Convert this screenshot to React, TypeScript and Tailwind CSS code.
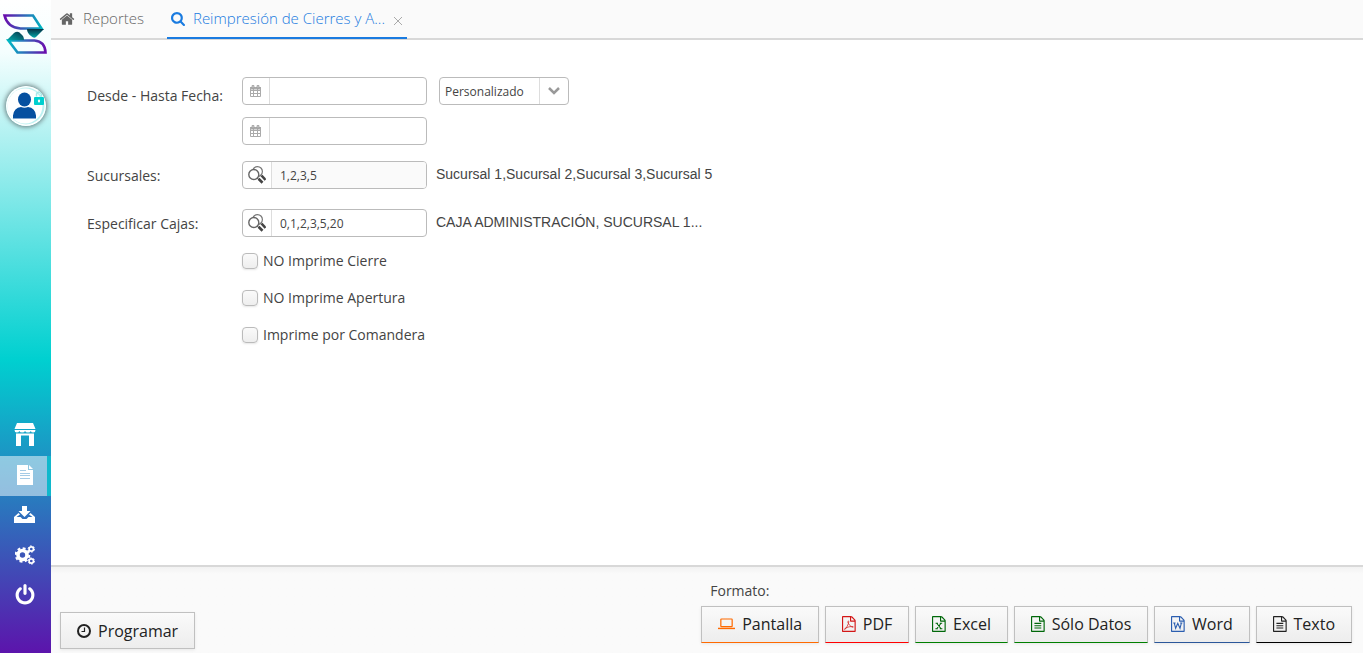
import { useState } from "react";
import type { ReactNode } from "react";

type IconProps = { className?: string };

function HomeIcon({ className }: IconProps) {
  return (
    <svg viewBox="0 0 1792 1792" fill="currentColor" className={className}>
      <path d="M1472 992v480q0 26-19 45t-45 19h-384v-384h-256v384h-384q-26 0-45-19t-19-45v-480q0-1 .5-3t.5-3l575-474 575 474q1 2 1 6zm223-69l-62 74q-8 9-21 11h-3q-13 0-21-7l-692-577-692 577q-12 8-24 7-13-2-21-11l-62-74q-8-10-7-23.5t11-21.5l719-599q32-26 76-26t76 26l244 204v-195q0-14 9-23t23-9h192q14 0 23 9t9 23v408l219 182q10 8 11 21.5t-7 23.5z" />
    </svg>
  );
}

function SearchIcon({ className }: IconProps) {
  return (
    <svg viewBox="64 128 1664 1664" fill="currentColor" className={className}>
      <path d="M1216 832q0-185-131.5-316.5t-316.5-131.5-316.5 131.5-131.5 316.5 131.5 316.5 316.5 131.5 316.5-131.5 131.5-316.5zm512 832q0 52-38 90t-90 38q-54 0-90-38l-343-342q-179 124-399 124-143 0-273.5-55.5t-225-150-150-225-55.5-273.5 55.5-273.5 150-225 225-150 273.5-55.5 273.5 55.5 225 150 150 225 55.5 273.5q0 220-124 399l343 343q37 37 37 90z" />
    </svg>
  );
}

function PowerIcon({ className }: IconProps) {
  return (
    <svg viewBox="0 0 1792 1792" fill="currentColor" className={className}>
      <path d="M1664 896q0 156-61 298t-164 245-245 164-298 61-298-61-245-164-164-245-61-298q0-182 80.5-343t226.5-270q43-32 95.5-25t83.5 50q32 42 24.5 94.5t-49.5 84.5q-98 74-151.5 181t-53.5 228q0 104 40.5 198.5t109.5 163.5 163.5 109.5 198.5 40.5 198.5-40.5 163.5-109.5 109.5-163.5 40.5-198.5q0-121-53.5-228t-151.5-181q-42-32-49.5-84.5t24.5-94.5q31-43 84-50t95 25q146 109 226.5 270t80.5 343zm-640-768v640q0 52-38 90t-90 38-90-38-38-90v-640q0-52 38-90t90-38 90 38 38 90z" />
    </svg>
  );
}

function StoreIcon({ className }: IconProps) {
  return (
    <svg viewBox="0 0 22 24" fill="currentColor" className={className}>
      <path d="M3 0h16l2.500 6h-21z" />
      <path d="M0.500 7h21q0 2.500-2.200 2.500t-2.500-1.500q-.5 1.500-2.800 1.500t-3-1.500q-.5 1.500-2.800 1.500t-2.900-1.500q-.5 1.500-2.600 1.500t-2.200-2.500z" />
      <path fillRule="evenodd" d="M2 10.500h18v12.500h-18zM7 12.500v10.500h8v-10.500z" />
    </svg>
  );
}

function ReportIcon({ className }: IconProps) {
  return (
    <svg viewBox="0 0 16 20" className={className}>
      <path d="M0 0h11v5h5v15h-16z" fill="#fff" />
      <path d="M12 0l4 4h-4z" fill="#fff" />
      <path d="M3 5.500h6M3 8.500h10M3 10.500h10M3 13.500h10" stroke="#a5cbe6" />
    </svg>
  );
}

function InboxIcon({ className }: IconProps) {
  return (
    <svg viewBox="0 0 22 18" fill="currentColor" className={className}>
      <path d="M8 0h5v5h3.500l-6 6-6-6h3.500z" />
      <path d="M4.500 7l-4.500 4v6h21v-6l-4.500-4-1.500 1.500 3.500 2.500h-4l-2 2h-4l-2-2h-4l3.500-2.500z" />
    </svg>
  );
}

function GearsIcon({ className }: IconProps) {
  return (
    <svg viewBox="0 0 20 20" fill="none" stroke="currentColor" className={className}>
      <circle cx="7.500" cy="10" r="4.500" strokeWidth="3.600" />
      <circle cx="7.500" cy="10" r="6.800" strokeWidth="2" strokeDasharray="2.900 2.440" />
      <circle cx="16.300" cy="4" r="2.200" strokeWidth="1.700" />
      <circle cx="16.300" cy="4" r="3.200" strokeWidth="1" strokeDasharray="1.600 1.750" />
      <circle cx="16.300" cy="16" r="2.200" strokeWidth="1.700" />
      <circle cx="16.300" cy="16" r="3.200" strokeWidth="1" strokeDasharray="1.600 1.750" />
    </svg>
  );
}

function CalendarIcon({ className }: IconProps) {
  return (
    <svg viewBox="0 0 12 13" className={className}>
      <path d="M.5 2.500h10v9h-10zM.5 5.500h10M.5 8.500h10M3.500 4v8M7.500 4v8" fill="none" stroke="#aaa" />
      <path d="M0 2h11v2.500h-11z" fill="#aaa" />
      <path d="M2 .5h2v2.500h-2zM7 .5h2v2.500h-2z" fill="#ccc" stroke="#999" strokeWidth=".7" />
    </svg>
  );
}

function LookupIcon({ className }: IconProps) {
  return (
    <svg viewBox="0 0 18 18" fill="none" className={className}>
      <circle cx="9.500" cy="5.500" r="4.900" stroke="#777" strokeWidth="1.200" />
      <path d="M13.500 9.500l4 4.500" stroke="#444" strokeWidth="2.600" />
      <circle cx="5.800" cy="8.500" r="5" fill="#fff" stroke="#666" strokeWidth="1.400" />
      <path d="M9.300 12l1.500 1.500" stroke="#555" />
      <path d="M10.500 12.700l4 4" stroke="#444" strokeWidth="2.700" />
    </svg>
  );
}

function ClockIcon({ className }: IconProps) {
  return (
    <svg viewBox="1 1 14 14" fill="none" stroke="currentColor" className={className}>
      <circle cx="8" cy="8" r="6" strokeWidth="2" />
      <path d="M8.500 4.500v4h-3" strokeWidth="1.200" />
    </svg>
  );
}

function LaptopIcon({ className }: IconProps) {
  return (
    <svg viewBox="0 0 18 14" fill="none" stroke="currentColor" className={className}>
      <path d="M3.700 1.700h10.600q.7 0 .7.700v6.600q0 .7-.7.700h-10.600q-.7 0-.7-.7v-6.600q0-.7.7-.7z" strokeWidth="1.300" />
      <path d="M0 11.700h18" strokeWidth="1.500" />
    </svg>
  );
}

// Outlined sheet with a folded corner, shared by every export format
function FileIcon({ className, children }: IconProps & { children: ReactNode }) {
  return (
    <svg viewBox="0 0 1536 1792" fill="currentColor" className={className}>
      <path d="M1468 380q28 28 48 76t20 88v1152q0 40-28 68t-68 28h-1344q-40 0-68-28t-28-68v-1600q0-40 28-68t68-28h896q40 0 88 20t76 48zm-444-244v376h376q-10-29-22-41l-313-313q-12-12-41-22zm384 1528v-1024h-416q-40 0-68-28t-28-68v-416h-768v1536h1280z" />
      {children}
    </svg>
  );
}

const textMark = (
  <path d="M384 768h768v128h-768zM384 1024h768v128h-768zM384 1280h768v128h-768z" />
);

const pdfMark = (
  <path
    d="M670 760q-40-220 50-210 90 20-10 310-110 300-310 580-90 110-130 60-20-90 250-200 260-110 580-130 190 10 180 70-30 70-210-30-240-130-350-380z"
    fill="none"
    stroke="currentColor"
    strokeWidth="80"
  />
);

const excelMark = (
  <path
    d="M400 810h270M870 810h270M380 1430h270M870 1430h290M530 810l480 620M1010 810l-480 620"
    fill="none"
    stroke="currentColor"
    strokeWidth="120"
  />
);

const wordMark = (
  <path
    d="M250 790h260M1020 790h260M370 790l150 590 240-560 250 560 150-590"
    fill="none"
    stroke="currentColor"
    strokeWidth="120"
  />
);

function Logo() {
  return (
    <svg viewBox="0 0 46 42" fill="none" className="h-[42px] w-[46px]">
      <defs>
        <linearGradient id="logo-top" x1="0" y1="0" x2="1" y2="0">
          <stop offset="0" stopColor="#6a0dad" />
          <stop offset="1" stopColor="#00b4c0" />
        </linearGradient>
        <linearGradient id="logo-bottom" x1="0" y1="0" x2="1" y2="0">
          <stop offset="0" stopColor="#00b8c4" />
          <stop offset="1" stopColor="#6a0dad" />
        </linearGradient>
        <linearGradient id="logo-wedge" x1="0" y1="0" x2="0" y2="1">
          <stop offset="0" stopColor="#053346" />
          <stop offset="1" stopColor="#00a7a8" />
        </linearGradient>
        <linearGradient id="logo-wedge-left" x1="0" y1="1" x2="1" y2="0">
          <stop offset="0" stopColor="#00a7a8" />
          <stop offset="1" stopColor="#053346" />
        </linearGradient>
      </defs>
      <path d="M2.500 2.500h28.500l8.500 13h-21q-13-1-16-13z" stroke="url(#logo-top)" strokeWidth="2.600" />
      <path d="M6.500 27.500h26q10.500 1 11 12h-28z" stroke="url(#logo-bottom)" strokeWidth="2.600" />
      <path d="M25 16h17l-8 8q-2 2-5-1-4-3-4-7z" fill="url(#logo-wedge)" />
      <path d="M5 27l7-7q4-3 7 1 3 2 3 6z" fill="url(#logo-wedge-left)" />
    </svg>
  );
}

function Avatar() {
  return (
    <svg viewBox="0 0 40 40" className="size-10 rounded-full shadow-[0_0_5px_1px_#64787a]">
      <circle cx="20" cy="20" r="20" fill="#fff" />
      <circle cx="20" cy="20" r="18.500" fill="#bdf1f1" />
      <circle cx="19" cy="20" r="17.500" fill="#fff" />
      <ellipse cx="18.500" cy="13.500" rx="6.500" ry="7" fill="#0650a0" />
      <path d="M7 32.500v-3q1-8 8-8.500 3.500 1.500 7 0 7 .5 8 8.500v3z" fill="#0650a0" />
      <path d="M30.500 10.500v-2.500q2.500-4 5 0v2.500" fill="none" stroke="#a8e9e9" strokeWidth="1.500" />
      <rect x="28" y="11" width="10" height="8" rx="1" fill="#00cfcf" />
      <rect x="32" y="13.500" width="2" height="3" rx="1" fill="#fff" />
    </svg>
  );
}

const navItems = [
  { label: "Tienda", icon: <StoreIcon className="h-6 w-[22px]" />, active: false },
  { label: "Reportes", icon: <ReportIcon className="h-5 w-4" />, active: true },
  { label: "Descargas", icon: <InboxIcon className="h-[18px] w-[22px]" />, active: false },
  { label: "Configuración", icon: <GearsIcon className="size-5" />, active: false },
  { label: "Salir", icon: <PowerIcon className="size-[22px]" />, active: false },
];

function Sidebar() {
  return (
    <aside className="flex w-[51px] shrink-0 flex-col bg-[linear-gradient(180deg,#ffffff_0%,#f4fefe_8%,#00d0d0_55%,#2a78be_77%,#5c14ac_100%)]">
      <a href="#inicio" aria-label="Inicio" className="mt-[13px] ml-0.5">
        <Logo />
      </a>
      <button type="button" aria-label="Usuario" className="mt-[31px] ml-1.5 size-10 rounded-full">
        <Avatar />
      </button>
      <nav className="mt-auto mb-[37px] flex flex-col">
        {navItems.map((item) => (
          <a
            key={item.label}
            href={`#${item.label}`}
            aria-label={item.label}
            className={
              item.active
                ? "flex h-10 items-center justify-center border-r-4 border-[#10b8cc] bg-white/50 pb-0.5 pl-0.5 text-white"
                : "flex h-10 items-center justify-center pr-0.5 pb-0.5 text-white"
            }
          >
            {item.icon}
          </a>
        ))}
      </nav>
    </aside>
  );
}

function TabBar() {
  return (
    <header className="flex h-10 shrink-0 border-b-2 border-[#d8d8d8] bg-[#fafafa] text-[15px] font-light">
      <a href="#reportes" className="flex h-[37px] items-center gap-2 px-2 text-[#666]">
        <HomeIcon className="size-4 text-[#666]" />
        Reportes
      </a>
      <div className="ml-[15px] flex h-[39px] items-center border-b-2 border-[#1a7be0] pr-1 pl-1 text-[#1a7be0]">
        <a href="#reimpresion" className="flex items-center gap-2">
          <SearchIcon className="size-[14px]" />
          Reimpresión de Cierres y A...
        </a>
        <button type="button" aria-label="Cerrar pestaña" className="ml-2 pt-1 text-[#aaa]">
          <svg viewBox="0 0 10 10" className="size-[10px]" stroke="currentColor" fill="none">
            <path d="M1 1l8 8M9 1l-8 8" />
          </svg>
        </button>
      </div>
    </header>
  );
}

function DateInput({ label }: { label: string }) {
  return (
    <div className="flex h-7 w-[185px] overflow-hidden rounded-[4px] border border-[#bbb] bg-white">
      <button
        type="button"
        aria-label={`Elegir ${label}`}
        className="flex w-[27px] shrink-0 items-center justify-center border-r border-[#ddd]"
      >
        <CalendarIcon className="h-[13px] w-3" />
      </button>
      <input type="text" aria-label={label} className="min-w-0 flex-1 px-2 text-xs outline-none" />
    </div>
  );
}

type LookupProps = { id: string; value: string; description: string; readOnly?: boolean };

function LookupInput({ id, value, description, readOnly }: LookupProps) {
  const [text, setText] = useState(value);
  return (
    <div className="flex h-7 items-center gap-[9px]">
      <div className="flex h-7 w-[185px] shrink-0 overflow-hidden rounded-[4px] border border-[#bbb] bg-white">
        <button
          type="button"
          aria-label="Buscar"
          className="flex w-[29px] shrink-0 items-center justify-center border-r border-[#ddd]"
        >
          <LookupIcon className="size-[18px]" />
        </button>
        <input
          id={id}
          type="text"
          value={text}
          readOnly={readOnly}
          onChange={(e) => setText(e.target.value)}
          className="min-w-0 flex-1 px-2 pt-0.5 text-xs text-[#444] outline-none read-only:bg-[#fafafa]"
        />
      </div>
      <span className="pb-0.5 font-['Liberation_Sans',Arial,sans-serif] text-sm text-[#444]">
        {description}
      </span>
    </div>
  );
}

const options = ["NO Imprime Cierre", "NO Imprime Apertura", "Imprime por Comandera"];

function ReportForm() {
  return (
    <form className="grid flex-1 grid-cols-[155px_1fr] content-start overflow-auto border-b-2 border-[#d8d8d8] bg-white px-9 pt-[37px] text-sm text-[#444]">
      <span className="pt-[9px]">Desde - Hasta Fecha:</span>
      <div className="flex gap-3">
        <div className="flex flex-col gap-3">
          <DateInput label="Fecha desde" />
          <DateInput label="Fecha hasta" />
        </div>
        <div className="relative h-7 w-[130px]">
          <select
            aria-label="Período"
            className="size-full appearance-none rounded-[4px] border border-[#bbb] bg-white pt-0.5 pr-8 pl-[5px] text-xs outline-none"
          >
            <option>Personalizado</option>
          </select>
          <span className="pointer-events-none absolute inset-y-px right-px flex w-[29px] items-center justify-center border-l border-[#ddd]">
            <svg viewBox="0 0 12 8" className="h-2 w-3" fill="none" stroke="#999" strokeWidth="2.500">
              <path d="M1 1l5 5 5-5" />
            </svg>
          </span>
        </div>
      </div>

      <label htmlFor="sucursales" className="mt-4 pt-[5px]">Sucursales:</label>
      <div className="mt-4">
        <LookupInput
          id="sucursales"
          value="1,2,3,5"
          description="Sucursal 1,Sucursal 2,Sucursal 3,Sucursal 5"
          readOnly
        />
      </div>

      <label htmlFor="cajas" className="mt-5 pt-[5px]">Especificar Cajas:</label>
      <div className="mt-5">
        <LookupInput id="cajas" value="0,1,2,3,5,20" description="CAJA ADMINISTRACIÓN, SUCURSAL 1..." />
      </div>

      <div className="col-start-2 mt-[14px] flex flex-col gap-[17px]">
        {options.map((option) => (
          <label key={option} className="flex items-center gap-[5px]">
            <input
              type="checkbox"
              className="size-4 appearance-none rounded-[4px] border border-[#bbb] bg-linear-to-b from-[#fafafa] to-[#eee] shadow-[0_1px_2px_rgba(0,0,0,0.1)] checked:bg-[#1a7be0]"
            />
            {option}
          </label>
        ))}
      </div>
    </form>
  );
}

const buttonClass =
  "flex h-[37px] items-center gap-[7px] border border-[#c0c0c0] bg-linear-to-b from-[#fafafa] to-[#ededed] px-4 text-base text-[#222] shadow-[0_1px_3px_rgba(0,0,0,0.08)]";

const formats = [
  {
    label: "Pantalla",
    border: "border-b-[#ff6a00]",
    color: "text-[#ff6a00]",
    icon: <LaptopIcon className="h-[14px] w-[17px]" />,
  },
  {
    label: "PDF",
    border: "border-b-[#ff0000]",
    color: "text-[#d31616]",
    icon: <FileIcon className="h-4 w-auto">{pdfMark}</FileIcon>,
  },
  {
    label: "Excel",
    border: "border-b-[#008000]",
    color: "text-[#00680a]",
    icon: <FileIcon className="h-4 w-auto">{excelMark}</FileIcon>,
  },
  {
    label: "Sólo Datos",
    border: "border-b-[#008000]",
    color: "text-[#00680a]",
    icon: <FileIcon className="h-4 w-auto">{textMark}</FileIcon>,
  },
  {
    label: "Word",
    border: "border-b-[#2b579a]",
    color: "text-[#2b5eb0]",
    icon: <FileIcon className="h-4 w-auto">{wordMark}</FileIcon>,
  },
  {
    label: "Texto",
    border: "border-b-[#000000]",
    color: "text-[#222]",
    icon: <FileIcon className="h-4 w-auto">{textMark}</FileIcon>,
  },
];

function FooterBar() {
  return (
    <footer className="flex shrink-0 items-end justify-between bg-linear-to-b from-[#f2f2f2] to-[#fafafa] to-8% pt-[14px] pr-[11px] pl-[9px]">
      <button type="button" className={`${buttonClass} mb-1`}>
        <ClockIcon className="size-[14px]" />
        Programar
      </button>
      <div className="flex flex-col gap-[5px] pb-[10px]">
        <span className="pl-[9px] text-sm text-[#444]">Formato:</span>
        <div className="flex gap-1.5">
          {formats.map((format) => (
            <button key={format.label} type="button" className={`${buttonClass} ${format.border} pb-0.5`}>
              <span className={format.color}>{format.icon}</span>
              {format.label}
            </button>
          ))}
        </div>
      </div>
    </footer>
  );
}

export default function App() {
  return (
    <div className="flex h-screen bg-[#fafafa] font-['Open_Sans',sans-serif]">
      <Sidebar />
      <main className="flex min-w-0 flex-1 flex-col">
        <TabBar />
        <ReportForm />
        <FooterBar />
      </main>
    </div>
  );
}
